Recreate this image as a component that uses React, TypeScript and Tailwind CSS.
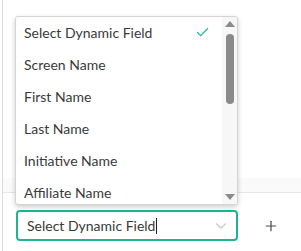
import { Check, ChevronDown, Plus } from "lucide-react"

const FIELDS = [
    "Select Dynamic Field",
    "Screen Name",
    "First Name",
    "Last Name",
    "Initiative Name",
    "Affiliate Name",
    "Email",
]

export default function App() {
    return (
        <div className="relative w-[301px] h-[251px] bg-white overflow-hidden" style={{ fontFamily: "Lato, 'Noto Sans', sans-serif" }}>
            <div className="absolute left-[2px] top-0 bottom-0 w-px bg-[#dcdcdc]" />

            <div className="pt-[178px]">
                <div className="h-[15px] bg-[#fafafa] border-b border-[#e6e6e6] ml-[3px]" />
                <div className="flex items-center mt-[17px] pl-[16px]">
                    <div className="w-[222px] h-[31px] border-2 border-[#1db596] rounded-[4px] flex items-center pl-[9px] pr-[6px] text-[14px] text-[#3a3a3a]">
                        <span className="whitespace-nowrap">Select Dynamic Field</span>
                        <span className="w-px h-[16px] bg-[#222] ml-[1px] shrink-0" />
                        <ChevronDown className="ml-auto text-[#c8c8c8]" size={18} strokeWidth={1.5} />
                    </div>
                    <Plus className="ml-[25px] text-[#4a4a4a]" size={16} strokeWidth={1.8} />
                </div>
            </div>

            <div className="absolute left-[15px] top-[16px] w-[223px] h-[189px] bg-white border border-[#d4d4d4] rounded-[3px] shadow-[0_2px_5px_rgba(0,0,0,0.2)] flex overflow-hidden">
                <ul className="flex-1 overflow-hidden text-[14px] text-[#3a3a3a] -mt-[1px]">
                    {FIELDS.map((f, i) => (
                        <li key={f} className="h-[32px] flex items-center pl-[8px] pr-[12px] shrink-0">
                            <span>{f}</span>
                            {i === 0 && <Check className="ml-auto text-[#1fb89b]" size={15} strokeWidth={2} />}
                        </li>
                    ))}
                </ul>
                <div className="w-[15px] bg-[#f7f7f7] flex flex-col items-center pt-[4px] pb-[4px]">
                    <div className="w-0 h-0 border-l-[5px] border-r-[5px] border-b-[6px] border-l-transparent border-r-transparent border-b-[#8a8a8a]" />
                    <div className="w-[8px] h-[70px] bg-[#8a8a8a] rounded-full mt-[7px]" />
                    <div className="mt-auto w-0 h-0 border-l-[5px] border-r-[5px] border-t-[6px] border-l-transparent border-r-transparent border-t-[#8a8a8a]" />
                </div>
            </div>
        </div>
    )
}
